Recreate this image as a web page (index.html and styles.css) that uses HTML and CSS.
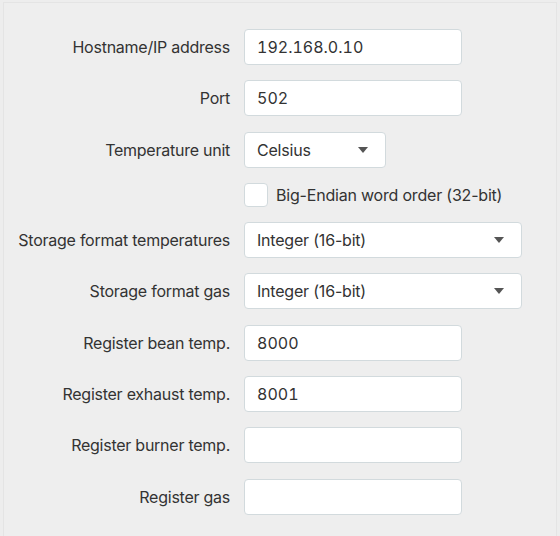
FILE: index.html
```html
<!DOCTYPE html>
<html>
<head>
<meta charset="utf-8">
<link rel="stylesheet" href="styles.css">
</head>
<body>
<div class="panel">
  <form class="form">
    <label class="label">Hostname/IP address</label>
    <div class="field"><input class="input" type="text" value="192.168.0.10"></div>

    <label class="label">Port</label>
    <div class="field"><input class="input" type="text" value="502"></div>

    <label class="label">Temperature unit</label>
    <div class="field"><div class="select small"><span>Celsius</span><span class="caret"></span></div></div>

    <div class="label"></div>
    <div class="field check-row"><span class="checkbox"></span><span class="check-text">Big-Endian word order (32-bit)</span></div>

    <label class="label">Storage format temperatures</label>
    <div class="field"><div class="select wide"><span>Integer (16-bit)</span><span class="caret"></span></div></div>

    <label class="label">Storage format gas</label>
    <div class="field"><div class="select wide"><span>Integer (16-bit)</span><span class="caret"></span></div></div>

    <label class="label">Register bean temp.</label>
    <div class="field"><input class="input" type="text" value="8000"></div>

    <label class="label">Register exhaust temp.</label>
    <div class="field"><input class="input" type="text" value="8001"></div>

    <label class="label">Register burner temp.</label>
    <div class="field"><input class="input" type="text" value=""></div>

    <label class="label">Register gas</label>
    <div class="field"><input class="input" type="text" value=""></div>
  </form>
</div>
</body>
</html>
```
FILE: styles.css
```css
html, body {
  margin: 0;
  padding: 0;
  background: #ededed;
  font-family: Inter, "Noto Sans", sans-serif;
  font-size: 16px;
  color: #333333;
  overflow: hidden;
}
.panel {
  box-sizing: border-box;
  margin: 2px 3px 0 3px;
  height: calc(100vh - 2px);
  border: 1px solid #e4e4e4;
  border-bottom: none;
  background: #eeeeee;
}
.form {
  display: grid;
  grid-template-columns: 226px 1fr;
  column-gap: 14px;
  row-gap: 15.3px;
  padding-top: 26px;
}
.label {
  display: flex;
  align-items: center;
  justify-content: flex-end;
  white-space: nowrap;
  letter-spacing: -0.25px;
}
.field {
  display: flex;
  align-items: center;
}
.input {
  box-sizing: border-box;
  width: 218px;
  height: 36px;
  border: 1px solid #d2dadd;
  border-radius: 4px;
  background: #ffffff;
  padding: 0 12px;
  font-family: inherit;
  font-size: 16px;
  font-variant-numeric: tabular-nums;
  color: #333333;
  outline: none;
  margin: 0;
}
.select {
  box-sizing: border-box;
  height: 36px;
  border: 1px solid #d2dadd;
  border-radius: 4px;
  background: #ffffff;
  padding: 0 12px 0 12px;
  display: flex;
  align-items: center;
  justify-content: space-between;
  letter-spacing: -0.2px;
}
.select.small { width: 142px; }
.select.wide { width: 278px; }
.caret {
  width: 0;
  height: 0;
  border-left: 5.5px solid transparent;
  border-right: 5.5px solid transparent;
  border-top: 6px solid #555555;
  margin-right: 5px;
}
.check-row {
  height: 24px;
  gap: 8px;
}
.checkbox {
  box-sizing: border-box;
  width: 24px;
  height: 24px;
  border: 1px solid #d2dadd;
  border-radius: 4px;
  background: #ffffff;
}
.check-text {
  white-space: nowrap;
  letter-spacing: -0.2px;
}
```
